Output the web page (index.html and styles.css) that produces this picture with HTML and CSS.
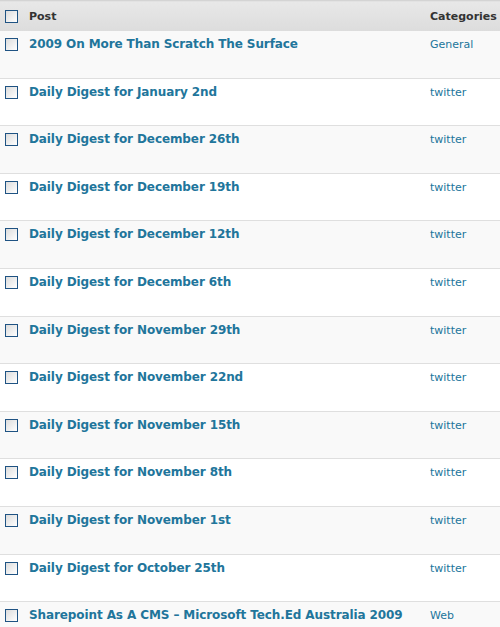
FILE: index.html
```html
<!DOCTYPE html>
<html>
<head>
    <title>Posts</title>
    <link rel="stylesheet" href="styles.css">
</head>
<body>
    <table class="posts">
        <thead>
            <tr>
                <th class="check"><span class="box"></span></th>
                <th class="title">Post</th>
                <th class="cats">Categories</th>
            </tr>
        </thead>
        <tbody>
            <tr class="alt"><td class="check"><span class="box"></span></td><td class="title"><a href="#">2009 On More Than Scratch The Surface</a></td><td class="cats"><a href="#">General</a></td></tr>
            <tr><td class="check"><span class="box"></span></td><td class="title"><a href="#">Daily Digest for January 2nd</a></td><td class="cats"><a href="#">twitter</a></td></tr>
            <tr class="alt"><td class="check"><span class="box"></span></td><td class="title"><a href="#">Daily Digest for December 26th</a></td><td class="cats"><a href="#">twitter</a></td></tr>
            <tr><td class="check"><span class="box"></span></td><td class="title"><a href="#">Daily Digest for December 19th</a></td><td class="cats"><a href="#">twitter</a></td></tr>
            <tr class="alt"><td class="check"><span class="box"></span></td><td class="title"><a href="#">Daily Digest for December 12th</a></td><td class="cats"><a href="#">twitter</a></td></tr>
            <tr><td class="check"><span class="box"></span></td><td class="title"><a href="#">Daily Digest for December 6th</a></td><td class="cats"><a href="#">twitter</a></td></tr>
            <tr class="alt"><td class="check"><span class="box"></span></td><td class="title"><a href="#">Daily Digest for November 29th</a></td><td class="cats"><a href="#">twitter</a></td></tr>
            <tr><td class="check"><span class="box"></span></td><td class="title"><a href="#">Daily Digest for November 22nd</a></td><td class="cats"><a href="#">twitter</a></td></tr>
            <tr class="alt"><td class="check"><span class="box"></span></td><td class="title"><a href="#">Daily Digest for November 15th</a></td><td class="cats"><a href="#">twitter</a></td></tr>
            <tr><td class="check"><span class="box"></span></td><td class="title"><a href="#">Daily Digest for November 8th</a></td><td class="cats"><a href="#">twitter</a></td></tr>
            <tr class="alt"><td class="check"><span class="box"></span></td><td class="title"><a href="#">Daily Digest for November 1st</a></td><td class="cats"><a href="#">twitter</a></td></tr>
            <tr><td class="check"><span class="box"></span></td><td class="title"><a href="#">Daily Digest for October 25th</a></td><td class="cats"><a href="#">twitter</a></td></tr>
            <tr class="alt"><td class="check"><span class="box"></span></td><td class="title"><a href="#">Sharepoint As A CMS &ndash; Microsoft Tech.Ed Australia 2009</a></td><td class="cats"><a href="#">Web</a></td></tr>
        </tbody>
    </table>
</body>
</html>
```

FILE: styles.css
```css
html, body { margin: 0; padding: 0; background: #fff; overflow: hidden; }
body { font-family: "DejaVu Sans", Verdana, sans-serif; }
a { color: #21759b; text-decoration: none; }
.posts { border-collapse: collapse; width: 540px; table-layout: fixed; }
.posts th { height: 30px; padding: 0; text-align: left; font-size: 11px; font-weight: bold; color: #333; background: linear-gradient(#e8e8e8, #dcdcdc); border-top: 1px solid #d4d4d4; vertical-align: middle; }
.posts td { height: 46.6px; padding: 0; vertical-align: top; border-bottom: 1px solid #dfdfdf; background: #fff; }
.posts tr.alt td { background: #f9f9f9; }
.check { width: 29px; }
.cats { width: 110px; }
.box { display: block; width: 11px; height: 11px; margin-left: 5px; border: 1px solid #1f5383; background: linear-gradient(135deg, #dcdcdc, #fff); }
td .box { margin-top: 7px; }
td.title { font-size: 12px; font-weight: bold; letter-spacing: -0.1px; }
td.title a { display: block; margin-top: 6px; }
td.cats { font-size: 11px; }
td.cats a { display: block; margin-top: 7px; }
```
